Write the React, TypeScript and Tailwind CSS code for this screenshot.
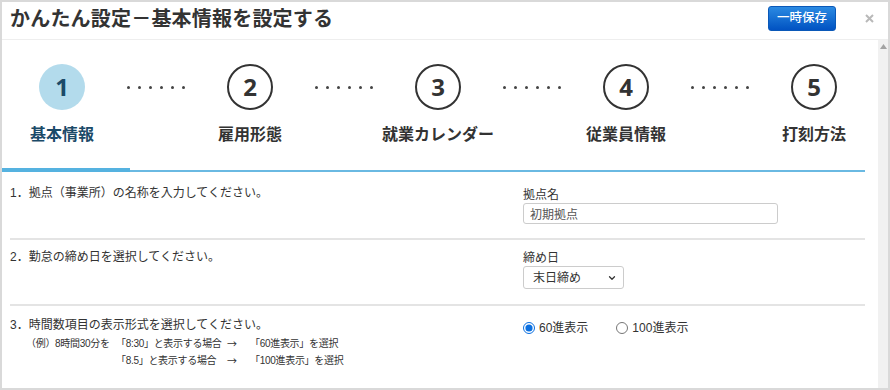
import { ChevronDown } from 'lucide-react';

const steps = [
  { no: 1, label: '基本情報' },
  { no: 2, label: '雇用形態' },
  { no: 3, label: '就業カレンダー' },
  { no: 4, label: '従業員情報' },
  { no: 5, label: '打刻方法' },
];

function Dots() {
  return (
    <div className="w-[68px] flex justify-center gap-[8px] pt-[24px] mt-[22px] h-[3px]">
      {[0, 1, 2, 3, 4, 5].map((i) => (
        <span key={i} className="w-[3px] h-[3px] rounded-full bg-[#444]" />
      ))}
    </div>
  );
}

export default function App() {
  return (
    <div className="w-[890px] h-[390px] border-2 border-[#d9d9d9] bg-white flex flex-col overflow-hidden text-[#333] font-['Liberation_Sans','Noto_Sans_CJK_JP',sans-serif]">
      {/* Header */}
      <div className="h-[38px] shrink-0 flex items-center pl-[8px] pr-[14px] border-b border-[#eeeeee]">
        <h1 className="text-[20px] font-bold tracking-[0.2px] text-[#333] leading-none -mt-[3px]">
          かんたん設定－基本情報を設定する
        </h1>
        <button className="ml-auto w-[68px] h-[25px] -mt-[4px] rounded-[3px] bg-gradient-to-b from-[#2b8ae2] to-[#0252c2] text-white text-[12.5px] font-medium border border-[#0a58b8]">
          一時保存
        </button>
        <svg className="ml-[29px] -mt-[4px]" width="9" height="9" viewBox="0 0 9 9">
          <path d="M1 1 L8 8 M8 1 L1 8" stroke="#b9b9b9" strokeWidth="2" />
        </svg>
      </div>

      <div className="flex flex-1 min-h-0">
        {/* Main */}
        <div className="flex-1 flex flex-col">
          {/* Stepper */}
          <div className="h-[132px] flex flex-col">
            <div className="flex flex-1">
              {steps.map((s, i) => (
                <div key={s.no} className="flex">
                  {i > 0 && <Dots />}
                  <div className="w-[120px] flex flex-col items-center pt-[24px]">
                    <div
                      className={
                        s.no === 1
                          ? 'w-[46px] h-[46px] rounded-full bg-[#b3dbec] flex items-center justify-center'
                          : 'w-[46px] h-[46px] rounded-full border-2 border-[#333] flex items-center justify-center'
                      }
                    >
                      <span
                        className={`font-['Open_Sans',sans-serif] font-bold text-[24px] leading-none ${
                          s.no === 1 ? 'text-[#1b4a68]' : 'text-[#333]'
                        }`}
                      >
                        {s.no}
                      </span>
                    </div>
                    <div
                      className={`mt-[13px] text-[16px] font-bold leading-[24px] whitespace-nowrap ${
                        s.no === 1 ? 'text-[#1b4a68]' : 'text-[#333]'
                      }`}
                    >
                      {s.label}
                    </div>
                  </div>
                </div>
              ))}
            </div>
            <div className="flex items-end mr-[13px]">
              <div className="w-[128px] h-[4px] bg-[#55b2e0]" />
              <div className="flex-1 h-[2px] bg-[#6ab9e2]" />
            </div>
          </div>

          {/* Rows */}
          <div className="ml-[8px] mr-[13px] text-[12px]">
            <div className="h-[68px] flex border-b-2 border-[#e4e4e4]">
              <div className="flex-1 pt-[12px] leading-[18px]">1．拠点（事業所）の名称を入力してください。</div>
              <div className="w-[342px] pt-[15px]">
                <div className="leading-[16px]">拠点名</div>
                <input
                  readOnly
                  value="初期拠点"
                  className="w-[255px] h-[21px] border border-[#cccccc] rounded-[3px] px-[6px] text-[12px] text-[#555] outline-none"
                />
              </div>
            </div>

            <div className="h-[66px] flex border-b-2 border-[#e4e4e4]">
              <div className="flex-1 pt-[8px] leading-[18px]">2．勤怠の締め日を選択してください。</div>
              <div className="w-[342px] pt-[10px]">
                <div className="leading-[16px]">締め日</div>
                <div className="relative w-[101px] h-[23px]">
                  <select className="appearance-none w-full h-full border border-[#cccccc] rounded-[3px] pl-[9px] text-[12px] text-[#333] bg-white outline-none">
                    <option>末日締め</option>
                  </select>
                  <ChevronDown className="absolute right-[7px] top-[7px] pointer-events-none" size={10} strokeWidth={3} color="#333" />
                </div>
              </div>
            </div>

            <div className="flex">
              <div className="flex-1 pt-[10px]">
                <div className="leading-[18px]">3．時間数項目の表示形式を選択してください。</div>
                <div className="pl-[16px] text-[10px] leading-[17px] mt-[1px] tracking-[-0.3px]">
                  <div className="flex">
                    <span className="w-[90px] whitespace-nowrap">（例）8時間30分を</span>
                    <span className="w-[111px] whitespace-nowrap">「8:30」と表示する場合</span>
                    <span className="w-[23px] font-['Noto_Sans_CJK_JP',sans-serif]">→</span>
                    <span className="whitespace-nowrap">「60進表示」を選択</span>
                  </div>
                  <div className="flex">
                    <span className="w-[90px]" />
                    <span className="w-[111px] whitespace-nowrap">「8.5」と表示する場合</span>
                    <span className="w-[23px] font-['Noto_Sans_CJK_JP',sans-serif]">→</span>
                    <span className="whitespace-nowrap">「100進表示」を選択</span>
                  </div>
                </div>
              </div>
              <div className="w-[342px] pt-[14px] flex items-start gap-[28px]">
                <label className="flex items-center gap-[4px] leading-[16px]">
                  <input type="radio" name="fmt" defaultChecked className="w-[12px] h-[12px] m-0 accent-[#0a6fe0]" />
                  <span>60進表示</span>
                </label>
                <label className="flex items-center gap-[4px] leading-[16px]">
                  <input type="radio" name="fmt" className="w-[12px] h-[12px] m-0" />
                  <span>100進表示</span>
                </label>
              </div>
            </div>
          </div>
        </div>

        {/* Scrollbar */}
        <div className="w-[10px] bg-[#f1f1f1] flex justify-center pt-[4px]">
          <svg width="7" height="5" viewBox="0 0 7 5">
            <path d="M3.5 0 L7 5 L0 5 Z" fill="#a3a3a3" />
          </svg>
        </div>
      </div>
    </div>
  );
}
